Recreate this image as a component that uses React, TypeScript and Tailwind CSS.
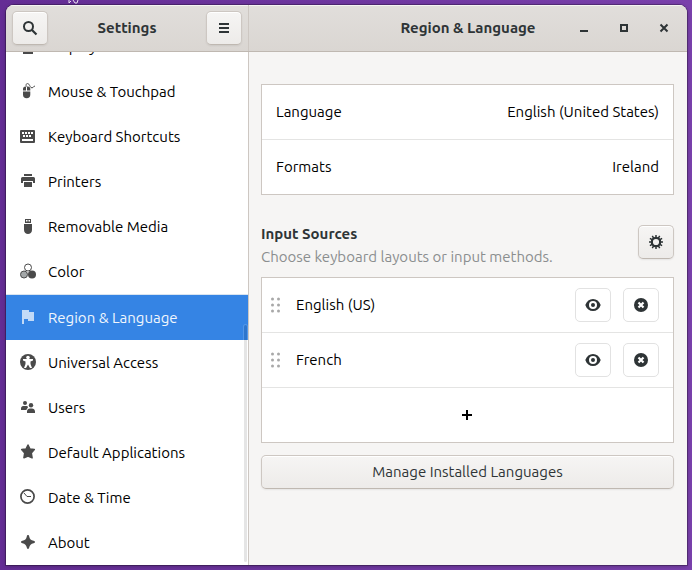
import { useState } from "react";
import type { ReactNode } from "react";
import clsx from "clsx";

interface NavItem {
  label: string;
  icon: ReactNode;
}

const NAV_ITEMS: NavItem[] = [
  {
    label: "Displays",
    icon: <path d="M1 1h14v11H1zM5 13h6l2 1v2H3v-2z" />,
  },
  {
    label: "Mouse & Touchpad",
    icon: (
      <>
        <path d="M3 7.5V6a2.5 2.5 0 0 1 2.5-2.5H6v4zM7 3.500h.8A2.500 2.500 0 0 1 10.300 6v1.500H7zM3 8.500h7.300v3a3.650 3.800 0 0 1-7.300 0z" />
        <path d="M6.500 3.500C5 1 7.500-.3 8.800 1.200S10.300 5 12 4.800s1.500-1.600 3-1.800" fill="none" stroke="currentColor" />
      </>
    ),
  },
  {
    label: "Keyboard Shortcuts",
    icon: (
      <path
        fillRule="evenodd"
        d="M1 2h13a1 1 0 0 1 1 1v11a1 1 0 0 1-1 1H1a1 1 0 0 1-1-1V3a1 1 0 0 1 1-1zM2 4v2h2V4zM5 4v2h2V4zM8 4v2h2V4zM11 4v2h2V4zM3 7v2h2V7zM6 7v2h2V7zM9 7v2h2V7zM2 11v2h11v-2z"
      />
    ),
  },
  {
    label: "Printers",
    icon: <path d="M4 1h8v2H4zM2.500 4h11A1.500 1.500 0 0 1 15 5.500V10h-2V8H3v2H1V5.500A1.500 1.500 0 0 1 2.500 4zM4 9h8v5H4z" />,
  },
  {
    label: "Removable Media",
    icon: (
      <path
        fillRule="evenodd"
        d="M5 1h6v4H5zM6 2v1.500h1.500V2zM8.500 2v1.500H10V2zM4 6h8v6c0 2.500-2 4-4 4s-4-1.500-4-4z"
      />
    ),
  },
  {
    label: "Color",
    icon: (
      <>
        <circle cx="8" cy="4.500" r="3.500" fill="none" stroke="currentColor" />
        <circle cx="4" cy="11.500" r="3.500" fill="#a3a7a8" stroke="currentColor" />
        <circle cx="12" cy="11.500" r="4" />
      </>
    ),
  },
  {
    label: "Region & Language",
    icon: <path d="M2 1h7v2h5v9H8v-2H4v5H2z" />,
  },
  {
    label: "Universal Access",
    icon: (
      <>
        <circle cx="8" cy="8" r="8" />
        <circle cx="8" cy="3.600" r="1.800" fill="#fff" />
        <path d="M3 5h10v1.600L10.500 7.500v2.500l1.500 4h-2l-2-3.500L6 14H4L5.500 10V7.500L3 6.600z" fill="#fff" />
      </>
    ),
  },
  {
    label: "Users",
    icon: (
      <>
        <circle cx="5" cy="4" r="2" />
        <circle cx="11" cy="6.300" r="2.200" />
        <path d="M1 11V9.500C1 7.500 2.500 7 4 7h2c1.200 0 2 .5 2 1.300L6.300 11zM7 14v-1.500C7 10.500 8.500 9.500 10 9.500h2c1.500 0 3 1 3 3V14z" />
      </>
    ),
  },
  {
    label: "Default Applications",
    icon: (
      <path
        d="M8 1l2 4 4.300.6-3 3.400.8 4.800L8 12l-4.100 1.800.8-4.800-3-3.400L6 5z"
        stroke="currentColor"
        strokeLinejoin="round"
        strokeWidth="1.500"
      />
    ),
  },
  {
    label: "Date & Time",
    icon: (
      <>
        <circle cx="7.500" cy="7.500" r="6.600" fill="none" stroke="currentColor" strokeWidth="1.700" />
        <path d="M4 4l3 3.500h4" fill="none" stroke="currentColor" />
      </>
    ),
  },
  {
    label: "About",
    icon: <path d="M8 1c.8 0 1 .6 1.200 1.400C9.700 5 11 6.300 13.600 6.800c.8.200 1.400.4 1.400 1.200s-.6 1-1.400 1.200C11 9.700 9.700 11 9.200 13.600 9 14.400 8.800 15 8 15s-1-.6-1.200-1.400C6.300 11 5 9.700 2.400 9.200 1.600 9 1 8.800 1 8s.6-1 1.400-1.200C5 6.300 6.300 5 6.800 2.400 7 1.600 7.200 1 8 1z" />,
  },
];

const INPUT_SOURCES = ["English (US)", "French"];

function Icon({ children, className }: { children: ReactNode; className?: string }) {
  return (
    <svg width="16" height="16" viewBox="0 0 16 16" fill="currentColor" aria-hidden="true" className={clsx("shrink-0", className)}>
      {children}
    </svg>
  );
}

function RaisedButton({ label, className, children }: { label?: string; className?: string; children: ReactNode }) {
  return (
    <button
      type="button"
      aria-label={label}
      className={clsx(
        "flex h-[34px] items-center justify-center rounded-[5px] border border-[#cdc7c2] border-b-[#bfb8b1] bg-linear-to-b from-[#f6f5f4] to-[#edebe9] shadow-[inset_0_1px_#ffffff,0_1px_2px_rgba(0,0,0,0.07)]",
        className
      )}
    >
      {children}
    </button>
  );
}

function RowButton({ label, children }: { label: string; children: ReactNode }) {
  return (
    <button
      type="button"
      aria-label={label}
      className="flex h-[34px] w-9 items-center justify-center rounded-[5px] border border-[#e2e2e2] bg-white text-[#2e3436]"
    >
      <Icon>{children}</Icon>
    </button>
  );
}

function Sidebar() {
  const [active, setActive] = useState("Region & Language");

  return (
    <nav className="relative flex min-h-0 w-[243px] shrink-0 flex-col justify-end overflow-hidden border-r border-[#cdc7c2] bg-white">
      {NAV_ITEMS.map((item) => (
        <button
          key={item.label}
          type="button"
          onClick={() => setActive(item.label)}
          className={clsx(
            "flex shrink-0 items-center gap-3 pl-3.5 text-left",
            item.label === active
              ? "h-[46px] border-t border-[#d9e4f0] bg-[#3584e4] bg-clip-padding text-[#f0f6fd]"
              : "h-[45px] text-black"
          )}
        >
          <Icon className={clsx("mb-px", item.label === active ? "text-[#c2daf7]" : "text-[#4a4a4a]")}>{item.icon}</Icon>
          {item.label}
        </button>
      ))}
      {/* Scroll indicator */}
      <div className="absolute right-px bottom-[3px] h-[237px] w-[3px] rounded-full bg-black/10 shadow-[0_0_0_1px_rgba(255,255,255,0.15)]" />
    </nav>
  );
}

function RegionPanel() {
  return (
    <main className="min-w-0 flex-1 pt-8 pr-[13px] pl-3">
      <div className="divide-y divide-[#e4e4e3] border border-[#cdc7c2] bg-white text-black">
        <button type="button" className="flex h-[55px] w-full items-center justify-between px-3.5">
          <span>Language</span>
          <span>English (United States)</span>
        </button>
        <button type="button" className="flex h-[54px] w-full items-center justify-between px-3.5">
          <span>Formats</span>
          <span>Ireland</span>
        </button>
      </div>

      <div className="mt-[27px] flex items-start justify-between leading-[23px]">
        <div>
          <h2 className="font-bold">Input Sources</h2>
          <p className="text-[#8b8e8f]">Choose keyboard layouts or input methods.</p>
        </div>
        <RaisedButton label="Input source options" className="mt-[3px] w-9">
          <Icon>
            <circle cx="8" cy="8" r="4.200" fill="none" stroke="currentColor" strokeWidth="2.200" />
            <path
              d="M8 1v2.500M8 12.500V15M1 8h2.500M12.500 8H15M4.300 1.900l1.300 2.200M10.400 11.900l1.300 2.200M11.700 1.900l-1.300 2.200M5.600 11.900l-1.300 2.200M1.900 4.300l2.200 1.300M11.900 10.400l2.200 1.300M14.100 4.300l-2.200 1.300M4.100 10.400l-2.200 1.300"
              stroke="currentColor"
              strokeWidth="1.500"
            />
          </Icon>
        </RaisedButton>
      </div>

      <ul className="mt-[9px] divide-y divide-[#e4e4e3] border border-[#cdc7c2] bg-white text-black">
        {INPUT_SOURCES.map((source) => (
          <li key={source} className="flex h-[55px] items-center pr-3.5 pl-[9px]">
            <svg width="9" height="16" viewBox="0 0 9 16" fill="#a8a8a8" aria-hidden="true">
              {[2, 8, 14].map((y) => (
                <g key={y}>
                  <circle cx="1.500" cy={y} r="1.500" />
                  <circle cx="7.500" cy={y} r="1.500" />
                </g>
              ))}
            </svg>
            <span className="flex-1 pl-4">{source}</span>
            <div className="flex gap-3">
              <RowButton label={`Preview ${source}`}>
                <path
                  fillRule="evenodd"
                  d="M8 2c3.500 0 6.300 2 7.700 6-1.400 4-4.200 6-7.700 6S1.700 12 .3 8C1.700 4 4.500 2 8 2zM8 4a4 4 0 1 0 0 8 4 4 0 0 0 0-8z"
                />
                <circle cx="8" cy="8" r="2" />
              </RowButton>
              <RowButton label={`Remove ${source}`}>
                <circle cx="8" cy="8" r="7" />
                <path d="M5.500 5.500l5 5M10.500 5.500l-5 5" stroke="#fff" strokeWidth="2.200" />
              </RowButton>
            </div>
          </li>
        ))}
        <li>
          <button type="button" aria-label="Add input source" className="flex h-[54px] w-full items-center justify-center">
            <Icon>
              <path d="M6 3h2v4h4v2H8v4H6V9H2V7h4z" />
            </Icon>
          </button>
        </li>
      </ul>

      <RaisedButton className="mt-3 w-full">Manage Installed Languages</RaisedButton>
    </main>
  );
}

export default function App() {
  return (
    <div className="relative flex h-screen flex-col bg-linear-to-r from-[#642d95] to-[#7a41ac] px-[5px] pt-[5px] pb-[5px] pl-1.5 font-['Ubuntu','Noto_Sans',sans-serif] text-[15px] leading-5 text-[#2e3436]">
      {/* Pointer resting above the window */}
      <svg width="12" height="4" viewBox="0 0 12 4" className="absolute top-0 left-[68px]" aria-hidden="true">
        <path d="M1 0v3l2-2M5 0l2 3h2l1-3" fill="none" stroke="#e8e0ee" />
      </svg>

      <div className="flex min-h-0 flex-1 flex-col overflow-hidden rounded-t-lg bg-[#f6f5f4] shadow-[0_0_0_1px_rgba(0,0,0,0.25),0_1px_4px_rgba(0,0,0,0.3)]">
        <header className="flex h-[47px] shrink-0 border-b border-[#bfb8b1] bg-linear-to-b from-[#e1dedb] to-[#dad6d2] shadow-[inset_0_1px_#f5f4f2]">
          <div className="flex w-[243px] shrink-0 items-center justify-between border-r border-[#cdc7c2] px-1.5">
            <RaisedButton label="Search" className="w-9">
              <Icon>
                <circle cx="6.500" cy="6.500" r="4.500" fill="none" stroke="currentColor" strokeWidth="2" />
                <path d="M10 10l4.500 4.500" stroke="currentColor" strokeWidth="2.200" />
              </Icon>
            </RaisedButton>
            <h1 className="font-bold">Settings</h1>
            <RaisedButton label="Menu" className="w-9">
              <Icon>
                <path d="M3 3h10v2H3zM3 7h10v2H3zM3 11h10v2H3z" />
              </Icon>
            </RaisedButton>
          </div>
          <div className="grid flex-1 grid-cols-[1fr_auto_1fr] items-center">
            <h1 className="col-start-2 font-bold">Region &amp; Language</h1>
            <div className="flex justify-end gap-6 pr-[15px]">
              <button type="button" aria-label="Minimize">
                <Icon>
                  <path d="M4 10h8v2H4z" />
                </Icon>
              </button>
              <button type="button" aria-label="Maximize">
                <Icon>
                  <path fillRule="evenodd" d="M4 4h8v8H4zM6 6v4h4V6z" />
                </Icon>
              </button>
              <button type="button" aria-label="Close">
                <Icon>
                  <path d="M4.500 4.500l7 7M11.500 4.500l-7 7" stroke="currentColor" strokeWidth="2" />
                </Icon>
              </button>
            </div>
          </div>
        </header>

        <div className="flex min-h-0 flex-1">
          <Sidebar />
          <RegionPanel />
        </div>
      </div>
    </div>
  );
}
